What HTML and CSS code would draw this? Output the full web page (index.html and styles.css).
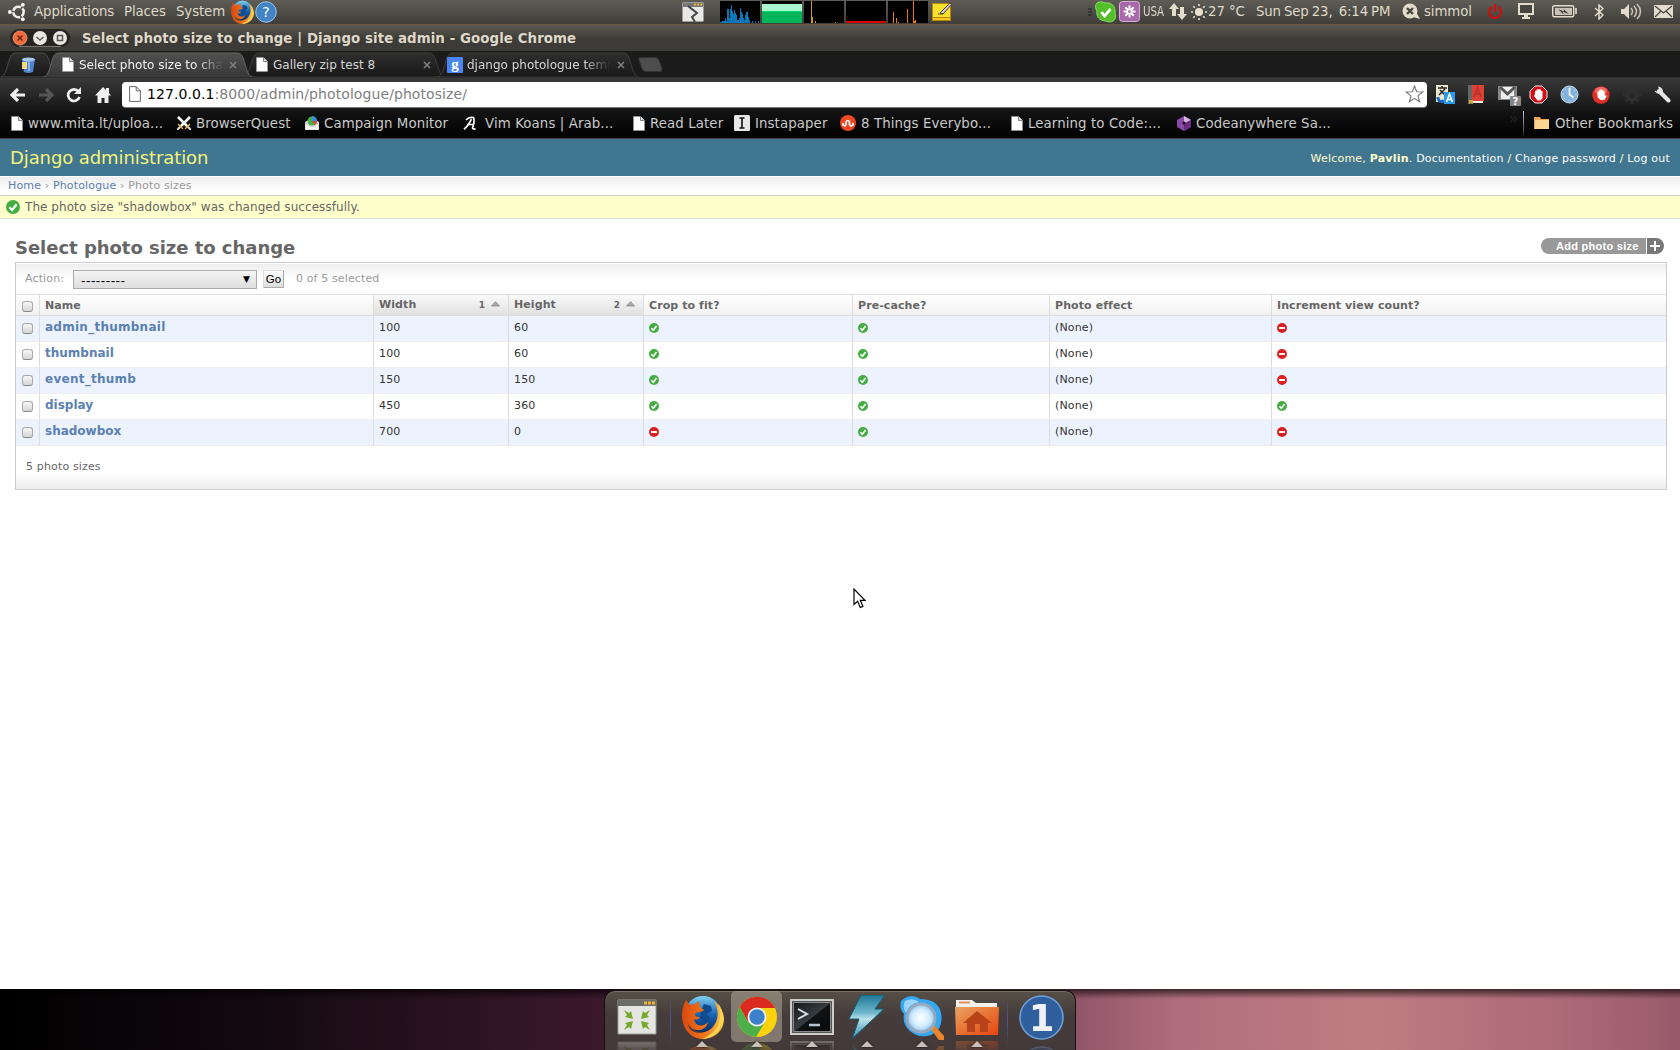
FILE: index.html
```html
<!DOCTYPE html>
<html lang="en">
<head>
<meta charset="utf-8">
<title>Select photo size to change | Django site admin</title>
<link rel="stylesheet" href="styles.css">
</head>
<body>
<svg class="defs" width="0" height="0">
<defs>
<linearGradient id="ffGlobe" x1="0" y1="0" x2="0" y2="1"><stop offset="0" stop-color="#7fd0f4"/><stop offset=".5" stop-color="#1b67b5"/><stop offset="1" stop-color="#0a2d66"/></linearGradient>
<linearGradient id="ffFur" x1="0" y1="0" x2="1" y2="0"><stop offset="0" stop-color="#d9480f"/><stop offset=".6" stop-color="#f07a1c"/><stop offset="1" stop-color="#fbd24a"/></linearGradient>
<linearGradient id="boltFill" x1="0" y1="0" x2="0" y2="1"><stop offset="0" stop-color="#1d7797"/><stop offset=".4" stop-color="#6fb6cc"/><stop offset=".55" stop-color="#bde3ec"/><stop offset="1" stop-color="#2b88a8"/></linearGradient>
<linearGradient id="folderFill" x1="0" y1="0" x2="1" y2="1"><stop offset="0" stop-color="#eaa367"/><stop offset=".5" stop-color="#e77434"/><stop offset="1" stop-color="#e8420f"/></linearGradient>
<linearGradient id="termFill" x1="0" y1="0" x2="1" y2="1"><stop offset="0" stop-color="#15181b"/><stop offset=".5" stop-color="#363c40"/><stop offset=".52" stop-color="#101214"/><stop offset="1" stop-color="#08090a"/></linearGradient>
<linearGradient id="tabOn" x1="0" y1="0" x2="0" y2="1"><stop offset="0" stop-color="#505050"/><stop offset="1" stop-color="#383838"/></linearGradient>
<linearGradient id="tabOff" x1="0" y1="0" x2="0" y2="1"><stop offset="0" stop-color="#2f2f2f"/><stop offset="1" stop-color="#181818"/></linearGradient>
<radialGradient id="lens"><stop offset="0" stop-color="#fff"/><stop offset=".6" stop-color="#d4edff"/><stop offset="1" stop-color="#8fc6f4"/></radialGradient>
<symbol id="firefox" viewBox="0 0 44 44"><circle cx="23" cy="19" r="18" fill="url(#ffGlobe)"/><path d="M24 9l7 2 1 5-5 3 3 5-5 4-5-5 1-7z" fill="#114a8e"/><path d="M2 20C2 13 4 9 6 5l4 5c4-1 7-2 9-4l1 6 4 3c-3 3-7 1-9 4 0 3 3 3 5 3-2 4-6 2-6 2 1 8 10 8 14 3-3 12-17 9-20 2 1 13 25 12 29-5 2-8-1-14-3-18 6 5 10 11 10 18 0 11-9 20-21 20S2 34 2 20z" fill="url(#ffFur)"/><path d="M38 8c5 7 6 15 3 23s-11 13-19 13c9-4 17-10 18-20 1-6 0-11-2-16z" fill="#fbd45a"/></symbol>
<symbol id="page" viewBox="0 0 12 15"><path d="M.5.5h7l4 4v10H.5z" fill="#fff" stroke="#999" stroke-width=".6"/><path d="M7.5.5v4h4" fill="#ddd" stroke="#555" stroke-width=".7"/></symbol>
<symbol id="close" viewBox="0 0 8 8"><path d="M1 1l6 6M7 1L1 7" stroke="#808080" stroke-width="1.500"/></symbol>
<symbol id="yes" viewBox="0 0 10 10"><circle cx="5" cy="5" r="5" fill="#44ad41"/><path d="M2.4 5.2l1.9 2L7.6 3" fill="none" stroke="#fff" stroke-width="1.6"/></symbol>
<symbol id="no" viewBox="0 0 10 10"><circle cx="5" cy="5" r="5" fill="#dd2020"/><path d="M2 5h6" stroke="#fff" stroke-width="2"/></symbol>
<symbol id="sort" viewBox="0 0 9 6"><path d="M.5 5L4.5.7 8.500 5z" fill="#aaa" stroke="#888" stroke-width=".8"/></symbol>
</defs>
</svg>

<header class="panel">
  <div class="panel-left">
    <svg class="ubuntu" width="20" height="20" viewBox="0 0 20 20"><circle cx="11.500" cy="10" r="5.200" fill="none" stroke="#eee" stroke-width="2.600" stroke-dasharray="9.400 1.500" stroke-dashoffset="4.700"/><g fill="#fff"><circle cx="2.900" cy="10" r="1.900"/><circle cx="15.800" cy="2.800" r="1.900"/><circle cx="15.800" cy="17.200" r="1.900"/></g></svg>
    <span class="m-apps">Applications</span><span class="m-places">Places</span><span class="m-system">System</span>
    <svg width="24" height="24"><use href="#firefox"/></svg>
    <svg class="help" width="22" height="22"><circle cx="11" cy="11" r="10.300" fill="#4284c4" stroke="#9cc5ea"/><text x="11" y="16" text-anchor="middle" fill="#fff" font-size="14">?</text></svg>
  </div>
  <div class="panel-mid">
    <svg class="launcher" width="22" height="20"><rect x=".5" y=".5" width="21" height="19" rx="1" fill="#e8e8e8" stroke="#999"/><path d="M1 1h20v4H1z" fill="#777"/><path d="M12 2.500h8" stroke="#f0b030" stroke-width="2" stroke-dasharray="2 1"/><path d="M6 4l9 7-5 4 3 5" fill="none" stroke="#444" stroke-width="2"/></svg>
    <svg class="graph" width="40" height="22"><path d="M0 22v-1h2v-1h3v-3h1v3h1V8h2v9h1V8h1V4h1v6h1v3h1v-4h1v3h1v2h1v5h2v-2h1V7h1v4h1v2h1v4h1v2h1v-5h1v-3h2v5h1v3h1v3h1v1z" fill="#0b76b8"/><path d="M32 20h1v2h-1zM35 20h1v2h-1zM38 20h1v2h-1z" fill="#0b76b8"/></svg>
    <svg class="graph" width="40" height="22"><path d="M0 3h40v8H0z" fill="#a9f5d0"/><path d="M0 10h40v12H0z" fill="#00b45a"/><path d="M0 10h40v1H0z" fill="#00d878"/></svg>
    <svg class="graph" width="40" height="22"><path d="M7 0h1v22H7zM8 16h1v6H8zM11 20h1v2h-1zM31 21h1v1h-1z" fill="#d0a000"/></svg>
    <svg class="graph" width="40" height="22"><path d="M0 20h40v2H0z" fill="#d40000"/></svg>
    <svg class="graph" width="40" height="22"><path d="M5 11h1v11H5zM8 17h1v5H8zM10 21h1v1h-1zM19 8h1v14h-1zM25 0h1v22h-1zM26 20h1v2h-1zM27 19h1v3h-1z" fill="#f57900"/></svg>
    <svg class="note" width="22" height="21"><path d="M1 2h19v18H1z" fill="#b98800"/><path d="M2 3h17v13H2z" fill="#f7e12d"/><path d="M2 17h17v2H2z" fill="#ffca20"/><path d="M9 12l10-10 2 1-9 10z" fill="#ccc" stroke="#533" stroke-width="1"/><path d="M7 13h5" stroke="#553"/></svg>
  </div>
  <div class="panel-right">
    <svg class="grip" width="5" height="8"><path d="M0 1h4M0 4h4M0 7h4" stroke="#222"/></svg>
    <svg class="skype" width="22" height="22"><path d="M2 2c3-2 6-1 8 0 7-1 11 4 10 10 3 7-4 11-9 8C4 20 1 15 2 10 0 7 0 4 2 2z" fill="#53bd2a" stroke="#8bdf68"/><path d="M6.500 11l3 4 6-7" fill="none" stroke="#fff" stroke-width="2.700"/></svg>
    <svg class="pink" width="21" height="21"><rect x=".5" y=".5" width="20" height="20" rx="3" fill="#a868a9" stroke="#d8add8"/><path d="M10.500 4.500v12M4.500 10.500h12M6.300 6.300l8.400 8.400M14.700 6.300l-8.400 8.400" stroke="#fff" stroke-width="2"/><circle cx="10.500" cy="10.500" r="1.500" fill="#b57ab6"/></svg>
    <span class="usa">USA</span>
    <svg class="net" width="18" height="17"><path d="M5 0l5 6H7v7H3V6H0zM13 17l5-6h-3V4h-4v7H8z" fill="#e4dccb"/></svg>
    <svg class="sun" width="16" height="16"><circle cx="8" cy="8" r="4" fill="#e9e1d0"/><path d="M8 0v2M8 14v2M0 8h2M14 8h2M2.300 2.300l1.500 1.500M12.200 12.200l1.500 1.500M13.700 2.300l-1.500 1.500M3.800 12.200l-1.500 1.500" stroke="#e9e1d0" stroke-width="1.600"/></svg>
    <span class="temp">27 °C</span><span class="clock">Sun Sep 23,&nbsp; 6:14 PM</span>
    <svg class="chat" width="18" height="17"><circle cx="8" cy="8" r="7.500" fill="#e4dccb"/><path d="M11 14l7 2-4-7z" fill="#e4dccb"/><path d="M5 5l6 6M11 5l-6 6" stroke="#47453f" stroke-width="2.400"/></svg>
    <span class="user">simmol</span>
    <svg class="power" width="16" height="16"><path d="M4.500 3a6 6 0 1 0 7 0M8 0v8" fill="none" stroke="#d50c0c" stroke-width="2.200"/></svg>
    <svg class="monitor" width="16" height="17"><path d="M1 1h14v10H1z" fill="#47453f" stroke="#e4dccb" stroke-width="2"/><path d="M6 12h4v2h2v2H4v-2h2z" fill="#e4dccb"/></svg>
    <svg class="battery" width="25" height="13"><rect x=".7" y=".7" width="21" height="11" rx="1.500" fill="none" stroke="#e4dccb" stroke-width="1.400"/><path d="M3 3h17v7H3zM23 3h2v6h-2z" fill="#c8c1b3"/><path d="M6 4l6 2.500-.5-2.500L17 9l-6-2 .5 2.500z" fill="#444"/></svg>
    <svg class="bt" width="10" height="16"><path d="M1 4l8 7-4 4V1l4 3.500L1 12" fill="none" stroke="#e4dccb" stroke-width="1.500"/></svg>
    <svg class="vol" width="21" height="17"><path d="M0 6h3l5-5v15l-5-5H0z" fill="#e4dccb"/><path d="M10 5q3 3.500 0 7M13 3q5 5.500 0 11M16 1q7 7.500 0 15" fill="none" stroke="#c9c2b4" stroke-width="1.500"/></svg>
    <svg class="mail" width="19" height="13"><path d="M0 0h19v13H0z" fill="#e4dccb"/><path d="M1 1l8.500 7L18 1M1 12l6-6M18 12l-6-6" fill="none" stroke="#47453f" stroke-width="1.200"/></svg>
  </div>
</header>

<div class="titlebar">
  <svg class="wbtns" width="60" height="19"><rect width="60" height="18" rx="9" fill="#252420"/><path d="M9 17.500h42" stroke="#77756c"/><circle cx="10" cy="9" r="7" fill="#ef6a3c" stroke="#f7a07b" stroke-width=".8"/><path d="M7.500 6.500l5 5M12.500 6.500l-5 5" stroke="#6b2a15" stroke-width="1.600"/><circle cx="30" cy="9" r="7" fill="#e9e7e1"/><path d="M26.500 8l3.500 3 3.500-3" fill="none" stroke="#666" stroke-width="1.600"/><circle cx="50" cy="9" r="7" fill="#e9e7e1"/><rect x="47.500" y="6.500" width="5" height="5" fill="none" stroke="#555" stroke-width="1.500"/></svg>
  <span>Select photo size to change | Django site admin - Google Chrome</span>
</div>

<nav class="tabs">
  <div class="tab pinned"><svg class="shape" width="56" height="25" viewBox="0 0 56 25"><path d="M0 25c4-2 5-6 7-13s3-11 8-11h26c5 0 6 4 8 11s3 11 7 13z" fill="url(#tabOff)" stroke="#4a4a4a"/></svg><svg class="fav" width="15" height="16"><path d="M1 2h13l-2 13q-5 2-9 0z" fill="#4d82cf"/><ellipse cx="7.500" cy="2.500" rx="6.500" ry="2" fill="#a6c8ef"/><path d="M1 5h5v7H1z" fill="#f1db75"/><path d="M8 5v9" stroke="#8fb4ec" stroke-width="2"/></svg></div>
  <div class="tab second"><svg class="shape" width="200" height="25"><path d="M0 25c4-2 5-6 7-13s3-11 8-11h170c5 0 6 4 8 11s3 11 7 13z" fill="url(#tabOff)" stroke="#3c3c3c"/></svg><svg class="fav" width="12" height="15"><use href="#page"/></svg><span>Gallery zip test 8</span><svg class="x" width="8" height="8"><use href="#close"/></svg></div>
  <div class="tab third"><svg class="shape" width="200" height="25"><path d="M0 25c4-2 5-6 7-13s3-11 8-11h170c5 0 6 4 8 11s3 11 7 13z" fill="url(#tabOff)" stroke="#3c3c3c"/></svg><svg class="fav" width="16" height="16"><rect width="16" height="16" rx="1" fill="#4a86f0"/><text x="8" y="11.500" text-anchor="middle" class="g" fill="#fff">g</text></svg><span class="fade">django photologue temp</span><svg class="x" width="8" height="8"><use href="#close"/></svg></div>
  <svg class="newtab" width="25" height="15"><path d="M3 .5h14q3 0 4 3l3 8q1 3-2 3H8q-3 0-4-3L1 3Q0 .5 3 .500z" fill="#4d4d4d" stroke="#343434"/></svg>
  <div class="tab active"><svg class="shape" width="208" height="25"><path d="M0 25c4-2 5-6 7-13s3-11 8-11h178c5 0 6 4 8 11s3 11 7 13z" fill="url(#tabOn)"/><path d="M0 25c4-2 5-6 7-13s3-11 8-11h178c5 0 6 4 8 11s3 11 7 13" fill="none" stroke="#666"/></svg><svg class="fav" width="12" height="15"><use href="#page"/></svg><span class="fade">Select photo size to change</span><svg class="x" width="8" height="8"><use href="#close"/></svg></div>
</nav>

<div class="toolbar">
  <svg class="back" width="16" height="14"><path d="M8 1L2 7l6 6M2.500 7H15" fill="none" stroke="#eee" stroke-width="3.200"/></svg>
  <svg class="fwd" width="16" height="14"><path d="M8 1l6 6-6 6M13.500 7H1" fill="none" stroke="#565656" stroke-width="3.200"/></svg>
  <svg class="reload" width="16" height="16"><path d="M12.500 4.500A5.800 5.800 0 1 0 13.500 10" fill="none" stroke="#eee" stroke-width="2.700"/><path d="M15 0v7H8z" fill="#eee"/></svg>
  <svg class="home" width="16" height="16"><path d="M8 0l3 3V1h3v5l2 2.500h-2.500V16h-4v-5h-3v5h-4V8.500H0z" fill="#eee"/></svg>
  <div class="omnibox"><svg width="12" height="16"><path d="M.6.6h6.600l4.200 4.200v10.600H.6z" fill="#fff" stroke="#666"/><path d="M7.200.6v4.200h4.200" fill="none" stroke="#666"/></svg><span class="url"><b>127.0.0.1</b>:8000/admin/photologue/photosize/</span><svg class="star" width="19" height="18"><path d="M9.500 1l2.200 5.700 6.100.3-4.800 3.900 1.600 5.900-5.100-3.400-5.100 3.400L6 10.900 1.200 7l6.100-.3z" fill="#fff" stroke="#777" stroke-width="1.100"/></svg></div>
  <div class="exts">
    <svg class="x1" width="20" height="20"><path d="M0 0h12v17H0z" fill="#eee7cf"/><path d="M2 3h9M6 1v2M3 10l6-6M4 5l6 6" stroke="#222" stroke-width="1.500"/><path d="M8 7h11v12H8z" fill="#2b9bef"/><path d="M2 12q0 6 6 4" fill="none" stroke="#1669c4" stroke-width="3"/><path d="M10.500 17l3-8 3 8M11.500 14.500h4" fill="none" stroke="#fff" stroke-width="1.500"/></svg>
    <svg class="x2" width="16" height="19"><path d="M0 0h4v19H0z" fill="#666"/><path d="M4 0h12v16H4z" fill="#db4235"/><path d="M3 16h12v2H3z" fill="#eee"/><path d="M6 12l3.500-9 3.500 9M7 9h5" fill="none" stroke="#b9332b" stroke-width="2"/><path d="M1 15h4v4l-2-1-2 1z" fill="#d7a833"/></svg>
    <svg class="x3" width="23" height="22"><path d="M0 2h19v14H0z" fill="#888"/><path d="M3 3h13v12H3z" fill="#eee"/><path d="M2 3l7.500 7L17 3" fill="none" stroke="#555" stroke-width="3"/><rect x="12" y="12" width="11" height="10" rx="1" fill="#888"/><text x="17.500" y="20.500" font-size="10" font-weight="700" fill="#fff" text-anchor="middle">?</text></svg>
    <svg class="x4" width="19" height="19"><path d="M6 1h7l5 5v7l-5 5H6l-5-5V6z" fill="#d50f16" stroke="#eee"/><path d="M6 9V6h1.500V4.500H9V4h1.500v.5H12V6h1.500v7l-2 2.500h-3L5 11z" fill="#fff"/></svg>
    <svg class="x5" width="19" height="19"><circle cx="9.500" cy="9.500" r="8.500" fill="#83b2dc" stroke="#c9dff0"/><path d="M9.500 3v6.500l4 3" fill="none" stroke="#fff" stroke-width="1.600"/><circle cx="9.500" cy="9.500" r="6.500" fill="none" stroke="#e5f0f9" stroke-dasharray="1 4"/></svg>
    <svg class="x6" width="18" height="18"><circle cx="9" cy="9" r="8.700" fill="#e33028"/><ellipse cx="9" cy="5" rx="6" ry="4" fill="#f16b63"/><path d="M5.500 9V5.500H7V4h1.300v-.5H10V4h1.300v1.500h1.500V10l1-1 1 1-2.500 4h-4L5.500 11z" fill="#fff"/></svg>
    <svg class="x7" width="18" height="18"><circle cx="9" cy="9" r="4.500" fill="none" stroke="#303030" stroke-width="4"/><path d="M9 0v3M9 15v3M0 9h3M15 9h3M2.500 2.500l2 2M13.500 13.500l2 2M15.500 2.500l-2 2M4.500 13.500l-2 2" stroke="#303030" stroke-width="2.500"/></svg>
    <svg width="17" height="17"><path d="M5 5l9.500 9.500" stroke="#e5e5e5" stroke-width="4" stroke-linecap="round"/><path d="M4 .5A5 5 0 0 1 9 6 5 5 0 0 1 .5 4.500l2.500 1 2-2z" fill="#e5e5e5"/></svg>
  </div>
</div>

<div class="bookmarks">
  <a class="b1"><svg width="12" height="15"><use href="#page"/></svg>www.mita.lt/uploa...</a>
  <a class="b2"><svg width="14" height="14"><path d="M1 1l10 10M13 1L3 11" stroke="#fff" stroke-width="2.600"/><path d="M1 8l5 5M13 8l-5 5" stroke="#d6a642" stroke-width="1.500"/><path d="M0 14l3-3M14 14l-3-3" stroke="#ddd" stroke-width="2"/></svg>BrowserQuest</a>
  <a class="b3"><svg width="14" height="14"><path d="M0 6l7-4 7 4v8H0z" fill="#ddd"/><circle cx="7" cy="5" r="4.500" fill="#46b04c"/><path d="M7 5V0a5 5 0 0 1 5 5z" fill="#3a8fe0"/><path d="M7 5h5q0 3-2 4z" fill="#e2452d"/><path d="M0 7l7 4 7-4v7H0z" fill="#f4f4f4" stroke="#aaa" stroke-width=".5"/></svg>Campaign Monitor</a>
  <a class="b4"><svg width="14" height="14"><path d="M1 13.200q4-3 7.500-10M3 4q3-3.500 7.500-2.500Q12 6 9.500 12q1 1.800 3 .5M4 8.500h7" fill="none" stroke="#fff" stroke-width="1.700"/></svg>Vim Koans | Arab...</a>
  <a class="b5"><svg width="12" height="15"><use href="#page"/></svg>Read Later</a>
  <a class="b6"><svg width="16" height="16"><rect width="16" height="16" rx="1.500" fill="#e8e8e8"/><path d="M5.500 3h5M5.500 13h5M8 3v10" stroke="#111" stroke-width="1.600"/></svg>Instapaper</a>
  <a class="b7"><svg width="16" height="16"><circle cx="8" cy="8" r="8" fill="#eb4823"/><path d="M3 8v2q2 2 3-.5V7q2-3 3.500 0v2.500q1.500 2.500 3.500.5V8" fill="none" stroke="#fff" stroke-width="1.700"/></svg>8 Things Everybo...</a>
  <a class="b8"><svg width="12" height="15"><use href="#page"/></svg>Learning to Code:...</a>
  <a class="b9"><svg width="14" height="15"><path d="M7 0l7 4v7l-7 4-7-4V4z" fill="#8a4aa5"/><path d="M7 0l7 4-7 3z" fill="#d7b2e3"/><path d="M7 8v7l7-4V4z" fill="#6b2c86"/><circle cx="7" cy="7" r="1.500" fill="#111"/></svg>Codeanywhere Sa...</a>
  <span class="more">»</span><i class="vline"></i>
  <a class="other"><svg width="16" height="14"><path d="M0 1h6l1 2h8v10H0z" fill="#e8a650"/><path d="M1 4h14v9H1z" fill="#fbd795"/></svg>Other Bookmarks</a>
</div>

<main class="page">
  <div class="dj-header"><span class="brand">Django administration</span><span class="tools">Welcome, <b>Pavlin</b>. <a>Documentation</a> / <a>Change password</a> / <a>Log out</a></span></div>
  <div class="crumbs"><span><a>Home</a> › <a>Photologue</a> › Photo sizes</span></div>
  <div class="message"><svg width="14" height="14"><use href="#yes"/></svg><span>The photo size "shadowbox" was changed successfully.</span></div>
  <div class="heading"><h1>Select photo size to change</h1><a class="add"><span>Add photo size</span><svg width="17" height="16"><path d="M0 0h9a8 8 0 0 1 0 16H0z" fill="#777"/><path d="M3 8h10M8 3v10" stroke="#fff" stroke-width="2"/></svg></a></div>
  <section class="module">
    <div class="actions"><label>Action:</label><div class="select"><span>---------</span><i>▼</i></div><button>Go</button><span class="count">0 of 5 selected</span></div>
    <table>
      <colgroup><col class="c1"><col class="c2"><col class="c3"><col class="c3"><col class="c5"><col class="c6"><col class="c7"><col></colgroup>
      <thead><tr><th class="ck"><i></i></th><th>Name</th><th class="sorted"><div>Width<em>1</em><svg width="9" height="6"><use href="#sort"/></svg></div></th><th class="sorted"><div>Height<em>2</em><svg width="9" height="6"><use href="#sort"/></svg></div></th><th>Crop to fit?</th><th>Pre-cache?</th><th>Photo effect</th><th>Increment view count?</th></tr></thead>
      <tbody>
        <tr><td class="ck"><i></i></td><td class="name wide">admin_thumbnail</td><td>100</td><td>60</td><td><svg class="flag"><use href="#yes"/></svg></td><td><svg class="flag"><use href="#yes"/></svg></td><td>(None)</td><td><svg class="flag"><use href="#no"/></svg></td></tr>
        <tr><td class="ck"><i></i></td><td class="name">thumbnail</td><td>100</td><td>60</td><td><svg class="flag"><use href="#yes"/></svg></td><td><svg class="flag"><use href="#yes"/></svg></td><td>(None)</td><td><svg class="flag"><use href="#no"/></svg></td></tr>
        <tr><td class="ck"><i></i></td><td class="name wide">event_thumb</td><td>150</td><td>150</td><td><svg class="flag"><use href="#yes"/></svg></td><td><svg class="flag"><use href="#yes"/></svg></td><td>(None)</td><td><svg class="flag"><use href="#no"/></svg></td></tr>
        <tr><td class="ck"><i></i></td><td class="name">display</td><td>450</td><td>360</td><td><svg class="flag"><use href="#yes"/></svg></td><td><svg class="flag"><use href="#yes"/></svg></td><td>(None)</td><td><svg class="flag"><use href="#yes"/></svg></td></tr>
        <tr><td class="ck"><i></i></td><td class="name">shadowbox</td><td>700</td><td>0</td><td><svg class="flag"><use href="#no"/></svg></td><td><svg class="flag"><use href="#yes"/></svg></td><td>(None)</td><td><svg class="flag"><use href="#no"/></svg></td></tr>
      </tbody>
    </table>
    <div class="paginator">5 photo sizes</div>
  </section>
</main>

<footer class="desktop">
  <div class="dock">
    <div class="slot first"><svg width="40" height="36"><path d="M1 1h38v34H1z" fill="#e4e4e2" stroke="#999"/><path d="M1 1h38v6H1z" fill="#6b6b69"/><path d="M27 4h11" stroke="#f0b030" stroke-width="3" stroke-dasharray="3 1"/><path d="M7 11l5 3 2-2 2 8-8-2 2-2zM33 11l-5 3-2-2-2 8 8-2-2-2zM7 31l5-3 2 2 2-8-8 2 2 2zM33 31l-5-3-2 2-2-8 8 2-2 2z" fill="#78a82b"/></svg></div>
    <i class="div"></i>
    <div class="slot run"><svg width="44" height="44"><use href="#firefox"/></svg></div>
    <div class="slot run current"><svg width="40" height="40" viewBox="0 0 40 40"><circle cx="20" cy="20" r="20" fill="#fbd20b"/><path d="M2.700 10A20 20 0 0 1 38 11H20l-9 14z" fill="#dc2a20"/><path d="M2.700 10A20 20 0 0 0 19 40l9-15-8 4-9-4z" fill="#4caf4a"/><circle cx="20" cy="20" r="9.500" fill="#f2f2f2"/><circle cx="20" cy="20" r="7.700" fill="#3c7fcb"/></svg></div>
    <div class="slot run"><svg width="44" height="36"><path d="M1 1h42v34H1z" fill="#555" stroke="#ccc" stroke-width="2"/><path d="M3.500 3.500h37v29h-37z" fill="url(#termFill)" stroke="#8a8a8a"/><path d="M8 10l9 5-9 5" fill="none" stroke="#d8dde2" stroke-width="2"/><path d="M19 26h11" stroke="#b5c5d2" stroke-width="2.500"/></svg></div>
    <div class="slot run"><svg width="36" height="44"><path d="M12 0h24L26 14h9L3 44l7-20H0z" fill="url(#boltFill)" stroke="#155a72"/></svg></div>
    <div class="slot run"><svg width="45" height="45"><path d="M2 6q10-9 19-2 18 0 21 14 3 16-10 22-12 4-21-4-8-7-6-17-5-5-3-13z" fill="#35a8f3"/><path d="M6 6q8-4 14 1-10 2-13 11-4-6-1-12z" fill="#9bd4ff"/><path d="M31 33l4-3 10 11v4h-5z" fill="#e9852b"/><circle cx="22" cy="23" r="14" fill="url(#lens)" stroke="#97a9bd" stroke-width="3"/></svg></div>
    <div class="slot run"><svg width="44" height="36"><path d="M1 8V1h16l4 3h21v6H1z" fill="#f1f1ef"/><path d="M4 3.500h11" stroke="#ec8f5c" stroke-width="2"/><path d="M0 8h44l-1 28H1z" fill="url(#folderFill)"/><path d="M22 12L8 24h4v9h8v-8h5v8h8v-9h4z" fill="#b8421a"/></svg></div>
    <i class="div"></i>
    <div class="slot last"><svg width="45" height="45"><circle cx="22.500" cy="22.500" r="21.500" fill="#305f9d" stroke="#70a0da" stroke-width="1.500"/><text x="22.500" y="35.500" text-anchor="middle" font-size="37" font-weight="700" fill="#eef2f7">1</text></svg></div>
  </div>
</footer>
<svg class="cursor" width="13" height="21"><path d="M1 1v15.500l3.600-3.300 2.700 6.300 2.600-1.100-2.600-6.100H12z" fill="#fff" stroke="#000" stroke-width="1.200"/></svg>
</body>
</html>
```

FILE: styles.css
```css
* { box-sizing: border-box; }
body { margin: 0; width: 1680px; height: 1050px; overflow: hidden; background: #fff; font-family: "DejaVu Sans", sans-serif; font-size: 13.33px; display: flex; flex-direction: column; }
svg { display: block; flex: none; }
i, em { font-style: normal; }
.defs { position: absolute; }
span, a { white-space: nowrap; }

.panel { height: 24px; flex: none; background: linear-gradient(#5e5c55, #3f3e3a); color: #dfd8c8; display: flex; align-items: flex-start; line-height: 22px; letter-spacing: -.1px; }
.panel-left, .panel-mid, .panel-right { display: flex; align-items: center; height: 23px; }
.panel-left { width: 682px; padding-left: 7px; }
.ubuntu { margin-right: 7px; }
.m-apps { width: 90px; }
.m-places { width: 52px; }
.m-system { width: 54px; }
.help { margin-left: 1px; }
.panel-mid { width: 406px; }
.launcher { margin-right: 16px; }
.graph { background: #000; margin-right: 2px; }
.note { margin-left: 1px; }
.panel-right { flex: 1; }
.grip { margin-right: 2px; }
.skype { margin-right: 2px; }
.pink { margin-right: 3px; }
.usa { width: 26px; font-size: 13.33px; transform: scaleX(.77); transform-origin: left; }
.net { margin-right: 4px; }
.temp { margin-left: 1px; width: 48px; }
.clock { width: 146px; letter-spacing: -.15px; word-spacing: -1px; }
.chat { margin-right: 4px; }
.user { width: 63px; }
.power { margin-right: 15px; }
.monitor { margin-right: 18px; }
.battery { margin-right: 17px; }
.bt { margin-right: 17px; }
.vol { margin-right: 12px; }

.titlebar { height: 27px; flex: none; background: linear-gradient(#5b5950, #3c3b37 55%); border-top: 1px solid #6a5840; display: flex; align-items: center; padding-left: 10px; color: #dfd8c8; font-weight: 700; letter-spacing: .09px; }
.wbtns { margin-right: 12px; }

.tabs { height: 26px; flex: none; background: #1b1b1b; position: relative; display: flex; align-items: flex-end; color: #d5d5d5; font-size: 12px; }
.tab { position: relative; height: 25px; display: flex; align-items: center; }
.shape { position: absolute; left: 0; top: 0; }
.tab > .fav, .tab > span, .tab > .x { position: relative; }
.pinned { width: 56px; margin-left: 1px; padding-left: 20px; }
.second { width: 200px; margin-left: 187px; padding-left: 12px; }
.second span { width: 150px; margin-left: 5px; }
.third { width: 200px; margin-left: -6px; padding-left: 9px; }
.third span { width: 143px; margin-left: 4px; }
.fade { overflow: hidden; -webkit-mask-image: linear-gradient(90deg, #000 82%, transparent); }
.third .x { margin-left: 7px; }
.g { font: 700 15px "Liberation Serif", serif; }
.newtab { margin: 0 0 5px; }
.active { width: 208px; margin-left: -619px; padding-left: 18px; color: #f0f0f0; }
.active span { width: 144px; margin-left: 5px; }
.active .x { margin-left: 6px; }

.toolbar { height: 33px; flex: none; background: linear-gradient(#393939, #161616); border-top: 1px solid #2e2e2e; display: flex; align-items: center; padding: 1px 0 0 10px; }
.back, .fwd { margin-right: 12px; }
.reload { margin-right: 13px; }
.home { margin-right: 11px; }
.omnibox { width: 1305px; height: 26px; background: #fff; border-radius: 4px; border-bottom: 1px solid #777; display: flex; align-items: center; padding-left: 7px; }
.url { flex: 1; color: #808080; font-size: 14px; margin-left: 6px; letter-spacing: .08px; }
.url b { font-weight: 400; color: #000; }
.star { margin-right: 3px; }
.exts { flex: 1; display: flex; align-items: center; padding-left: 9px; }
.x1 { margin-right: 12px; }
.x2 { margin-right: 14px; }
.x3 { margin-right: 8px; }
.x4 { margin-right: 12px; }
.x5, .x6, .x7 { margin-right: 13px; }

.bookmarks { height: 28px; flex: none; background: linear-gradient(#141414, #000); display: flex; align-items: center; padding: 0 0 2px 11px; color: #c8c8c8; letter-spacing: .1px; }
.bookmarks a { display: flex; align-items: center; }
.bookmarks a svg { margin-right: 5px; }
.b1 { width: 166px; }
.b2 { width: 128px; }
.b3 { width: 158px; }
.bookmarks .b4 svg { margin-right: 8px; }
.b4 { width: 170px; }
.b5 { width: 101px; }
.b6 { width: 106px; }
.b7 { width: 171px; }
.b8 { width: 166px; }
.b9 { width: 332px; }
.more { color: #222; width: 14px; font-size: 15px; height: 26px; }
.vline { width: 1px; height: 24px; background: linear-gradient(#c0c8e0, #333); margin-right: 10px; }
.other { flex: 1; }

.page { height: 851px; flex: none; border-top: 1px solid #444; color: #333; font-size: 12px; }
.dj-header { height: 37px; background: #417690; display: flex; align-items: center; justify-content: space-between; padding: 0 10px; color: #ffc; }
.brand { color: #f4f379; font-size: 18px; letter-spacing: -.09px; }
.tools { font-size: 11px; letter-spacing: .21px; padding-top: 2px; }
.tools a { color: #fff; }
.crumbs { height: 20px; border-top: 1px solid #fff; border-bottom: 1px solid #ccc; background: linear-gradient(#eee, #fff 80%); font-size: 11px; letter-spacing: .15px; color: #999; padding-left: 8px; line-height: 18px; }
.crumbs a, .name { color: #5b80b2; }
.message { height: 23px; background: #ffc; border-bottom: 1px solid #ddd; display: flex; align-items: center; padding-left: 6px; color: #666; letter-spacing: .06px; }
.message span { margin-left: 5px; }
.heading { height: 43px; display: flex; justify-content: space-between; padding: 18px 16px 0 15px; }
h1 { margin: 0; font-size: 18px; line-height: 22px; color: #666; letter-spacing: -.03px; }
.add { display: flex; height: 16px; margin-top: 1px; gap: 1px; font: 700 11px/16px "Liberation Sans", sans-serif; color: #fff; }
.add span { width: 105px; background: #999; border-radius: 8px 0 0 8px; padding-left: 15px; letter-spacing: .28px; }
.module { margin: 0 13px 0 15px; height: 228px; border: 1px solid #ccc; }
.actions { height: 31px; background: linear-gradient(#fff 1px, #eee 1px, #fff 16px); display: flex; align-items: center; padding-left: 9px; font-size: 11px; letter-spacing: .13px; color: #999; }
.actions label { width: 48px; }
.select { width: 184px; height: 19px; margin-top: 2px; border: 1px solid #aaa; background: linear-gradient(#f4f4f4, #dedede); color: #000; font: 13.33px/19px "Liberation Sans", sans-serif; letter-spacing: .5px; display: flex; justify-content: space-between; padding: 0 6px 0 7px; }
.select i { font: 9px/17px "DejaVu Sans", sans-serif; letter-spacing: 0; }
button { width: 21px; height: 18px; margin: 0 12px 0 6px; padding: 0; border: 1px solid #aaa; border-top-color: #ddd; border-left-color: #ddd; background: linear-gradient(#fff, #ddd); font: 11.500px "Liberation Sans", sans-serif; color: #000; }
table { border-collapse: separate; border-spacing: 0; table-layout: fixed; width: 100%; }
.c1 { width: 24px; } .c2 { width: 334px; } .c3 { width: 135px; } .c5 { width: 209px; } .c6 { width: 197px; } .c7 { width: 222px; }
th, td { padding: 0 5px; border-right: 1px solid #ddd; text-align: left; vertical-align: middle; }
th:last-child, td:last-child { border-right: 0; }
th { height: 22px; border-top: 1px solid #ddd; border-bottom: 1px solid #ddd; font-size: 11px; letter-spacing: .09px; color: #666; background: linear-gradient(#fff, #f1f1f1); }
th.sorted { background: linear-gradient(#fafafa, #e0e0e0); }
.sorted div { display: flex; align-items: center; padding: 0 3px 2px 0; }
.sorted em { font-size: 9px; margin: 2px 6px 0 auto; }
td { height: 26px; font-size: 11px; letter-spacing: .15px; border-bottom: 1px solid #eee; padding-bottom: 3px; }
tbody tr:nth-child(odd) { background: #edf3fe; }
td.name { font-size: 12px; font-weight: 700; letter-spacing: 0; }
td.wide { letter-spacing: .26px; }
th.ck { padding: 3px 0 0 6px; }
td.ck { padding: 0 0 0 6px; }
.ck i { display: block; width: 11px; height: 11px; border: 1px solid #aaa; border-bottom-color: #888; border-radius: 3px; background: linear-gradient(#f8f8f8, #d5d5d5); }
.flag { width: 10px; height: 10px; margin-top: 2px; }
.paginator { height: 43px; padding: 0 10px; line-height: 41px; font-size: 11px; letter-spacing: .15px; color: #666; background: linear-gradient(#fff 28px, #ececec); }

.desktop { height: 61px; flex: none; display: flex; justify-content: center; background: linear-gradient(rgba(0,0,0,.65), transparent 10px), linear-gradient(90deg, #000 0, #120910 250px, #3c192c 605px, #91556a 1076px, #b06e7c 1180px, #bf7c82 1370px, #ad6a77 1560px, #985a6b 1680px); }
.dock { width: 472px; height: 61px; margin-top: 1px; border: 1px solid #161010; border-bottom: 0; border-radius: 11px 11px 0 0; background: linear-gradient(#575046, #453c3b 40%, #443939); box-shadow: inset 0 1px #77706a; display: flex; overflow: hidden; padding-left: 2px; }
.slot { width: 55px; height: 52px; flex: none; display: flex; align-items: center; justify-content: center; position: relative; }
.slot svg { -webkit-box-reflect: below 6px linear-gradient(transparent 60%, rgba(0,0,0,.35)); }
.slot.first { width: 60px; }
.current::before { content: ""; position: absolute; inset: 0 2px 1px; background: rgba(170,160,145,.6); border-radius: 5px; z-index: 0; }
.current svg { position: relative; }
.run::after { content: ""; position: absolute; left: 22px; top: 50px; border: 6px solid transparent; border-top: 0; border-bottom: 6px solid #c8bfb8; filter: drop-shadow(0 0 1px #111); }
.div { width: 1px; height: 50px; margin: 4px 3px; background: linear-gradient(transparent, #55549a, transparent); }
.slot.last { width: 60px; }
.cursor { position: absolute; left: 853px; top: 588px; }
```
